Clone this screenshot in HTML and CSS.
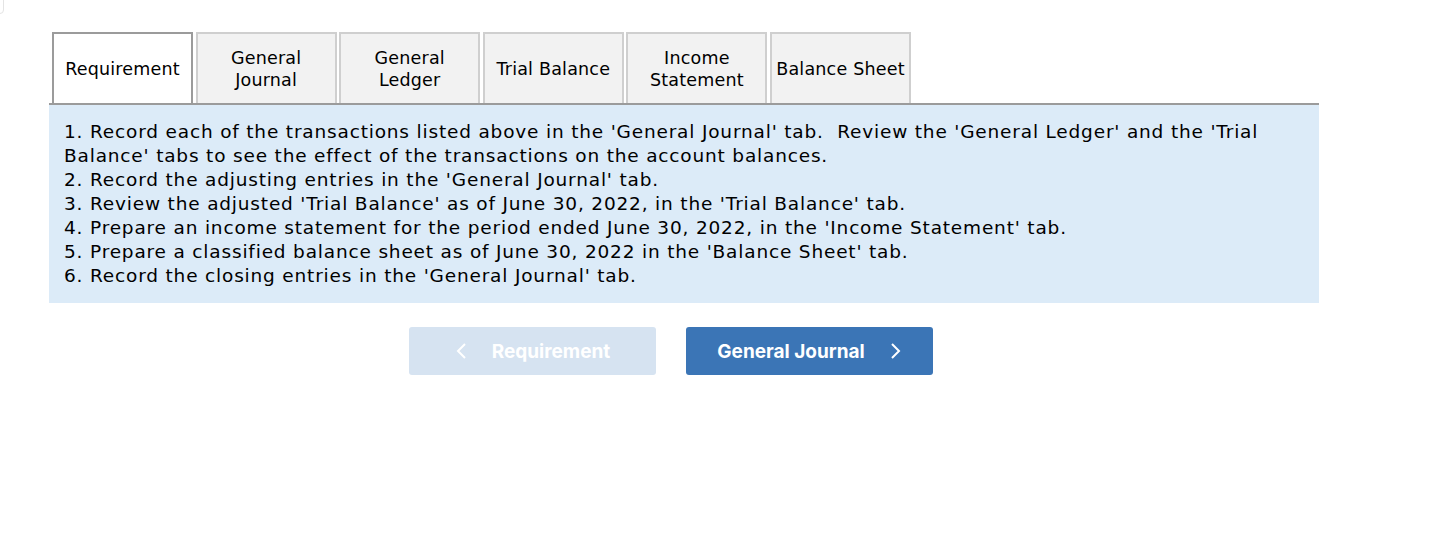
FILE: index.html
```html
<!DOCTYPE html>
<html>
<head>
<meta charset="utf-8">
<link rel="stylesheet" href="styles.css">
</head>
<body>
<div class="corner"></div>
<div class="page">
  <div class="tabs">
    <div class="tab active">Requirement</div>
    <div class="tab">General<br>Journal</div>
    <div class="tab">General<br>Ledger</div>
    <div class="tab">Trial Balance</div>
    <div class="tab">Income<br>Statement</div>
    <div class="tab">Balance Sheet</div>
  </div>
  <div class="panel">
    <p>1. Record each of the transactions listed above in the 'General Journal' tab.&nbsp; Review the 'General Ledger' and the 'Trial Balance' tabs to see the effect of the transactions on the account balances.</p>
    <p>2. Record the adjusting entries in the 'General Journal' tab.</p>
    <p>3. Review the adjusted 'Trial Balance' as of June 30, 2022, in the 'Trial Balance' tab.</p>
    <p>4. Prepare an income statement for the period ended June 30, 2022, in the 'Income Statement' tab.</p>
    <p>5. Prepare a classified balance sheet as of June 30, 2022 in the 'Balance Sheet' tab.</p>
    <p>6. Record the closing entries in the 'General Journal' tab.</p>
  </div>
  <div class="nav">
    <button class="btn prev"><svg width="12" height="16" viewBox="0 0 12 16"><path d="M10 1 L3 8 L10 15" fill="none" stroke="currentColor" stroke-width="2"/></svg><span>Requirement</span></button>
    <button class="btn next"><span>General Journal</span><svg width="12" height="16" viewBox="0 0 12 16"><path d="M2 1 L9 8 L2 15" fill="none" stroke="currentColor" stroke-width="2"/></svg></button>
  </div>
</div>
</body>
</html>
```
FILE: styles.css
```css
html, body { margin: 0; padding: 0; background: #fff; }
body { font-family: "DejaVu Sans", Verdana, sans-serif; color: #000; }
.corner {
  position: absolute; left: -6px; top: -6px; width: 8px; height: 18px;
  border: 1px solid #e4e4e4; border-radius: 4px;
}
.page { padding: 32px 0 0 49px; width: 1270px; }
.tabs {
  display: flex; gap: 2.6px; padding-left: 3px;
  border-bottom: 2px solid #9b9b9b;
}
.tab {
  box-sizing: border-box; width: 141px; height: 71px;
  display: flex; align-items: center; justify-content: center; text-align: center;
  font-size: 17.5px; line-height: 22px; letter-spacing: 0.2px;
  background: #f2f2f2;
  border: 2px solid #cfcfcf; border-bottom: none;
}
.tab.active { background: #fff; border-color: #9b9b9b; }
.panel {
  background: #dcebf8; padding: 15px 15px 15px 15px;
  font-size: 18.5px; line-height: 24px; height: 168px; letter-spacing: 0.82px;
}
.panel p { margin: 0; }
.nav { display: flex; gap: 30px; margin: 24px 0 0 360px; }
.btn {
  box-sizing: border-box; width: 247px; height: 48px; border: none; border-radius: 3px;
  color: #fff; font-family: Inter, Roboto, sans-serif; font-weight: 700; font-size: 19px;
  display: flex; align-items: center; justify-content: center; gap: 25px; padding: 0;
}
.btn.prev { background: #d6e3f1; }
.btn.next { background: #3b75b6; }
.btn svg { display: block; }
```
